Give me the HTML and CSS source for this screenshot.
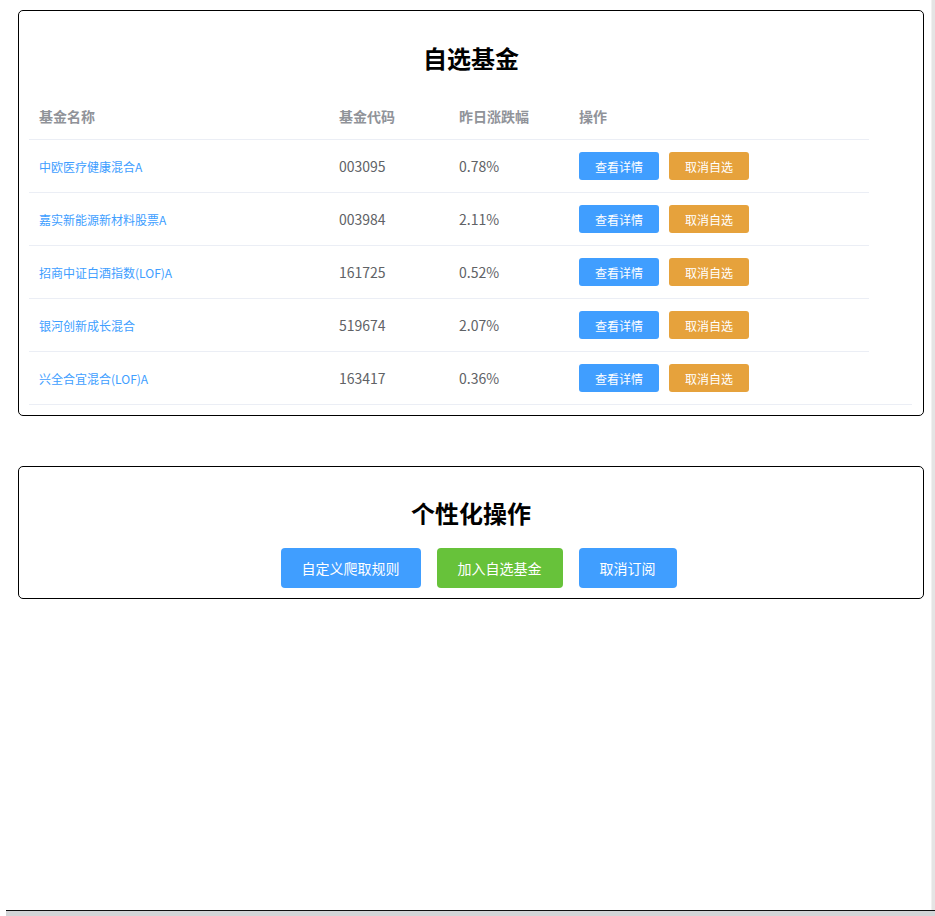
FILE: index.html
```html
<!DOCTYPE html>
<html lang="zh-CN">
<head>
<meta charset="utf-8">
<title>自选基金</title>
<link rel="stylesheet" href="styles.css">
</head>
<body>
<div class="page">
  <section class="card card-funds">
    <h2 class="card-title">自选基金</h2>
    <div class="table">
      <div class="row head">
        <div class="cell c-name">基金名称</div>
        <div class="cell c-code">基金代码</div>
        <div class="cell c-rate">昨日涨跌幅</div>
        <div class="cell c-ops">操作</div>
      </div>
      <div class="row">
        <div class="cell c-name"><a class="fund-link">中欧医疗健康混合A</a></div>
        <div class="cell c-code">003095</div>
        <div class="cell c-rate">0.78%</div>
        <div class="cell c-ops"><button class="btn-s blue">查看详情</button><button class="btn-s orange">取消自选</button></div>
      </div>
      <div class="row">
        <div class="cell c-name"><a class="fund-link">嘉实新能源新材料股票A</a></div>
        <div class="cell c-code">003984</div>
        <div class="cell c-rate">2.11%</div>
        <div class="cell c-ops"><button class="btn-s blue">查看详情</button><button class="btn-s orange">取消自选</button></div>
      </div>
      <div class="row">
        <div class="cell c-name"><a class="fund-link">招商中证白酒指数(LOF)A</a></div>
        <div class="cell c-code">161725</div>
        <div class="cell c-rate">0.52%</div>
        <div class="cell c-ops"><button class="btn-s blue">查看详情</button><button class="btn-s orange">取消自选</button></div>
      </div>
      <div class="row">
        <div class="cell c-name"><a class="fund-link">银河创新成长混合</a></div>
        <div class="cell c-code">519674</div>
        <div class="cell c-rate">2.07%</div>
        <div class="cell c-ops"><button class="btn-s blue">查看详情</button><button class="btn-s orange">取消自选</button></div>
      </div>
      <div class="row">
        <div class="cell c-name"><a class="fund-link">兴全合宜混合(LOF)A</a></div>
        <div class="cell c-code">163417</div>
        <div class="cell c-rate">0.36%</div>
        <div class="cell c-ops"><button class="btn-s blue">查看详情</button><button class="btn-s orange">取消自选</button></div>
      </div>
    </div>
  </section>

  <section class="card card-ops">
    <h2 class="card-title">个性化操作</h2>
    <div class="ops-row">
      <button class="btn blue w140">自定义爬取规则</button>
      <button class="btn green w126">加入自选基金</button>
      <button class="btn blue w98">取消订阅</button>
    </div>
  </section>
</div>
<div class="frame-right"></div>
<div class="frame-bottom"></div>
</body>
</html>
```

FILE: styles.css
```css
html, body {
  margin: 0;
  padding: 0;
  background: #fff;
}
body {
  font-family: "Noto Sans CJK SC", "Microsoft YaHei", "Noto Sans", sans-serif;
  color: #303133;
  width: 935px;
  height: 916px;
  overflow: hidden;
}
.page {
  padding: 10px 0 0 18px;
}
.card {
  width: 884px;
  border: 1px solid #000;
  border-radius: 5px;
  padding: 0 10px 10px;
  background: #fff;
}
.card-title {
  margin: 0;
  text-align: center;
  font-size: 24px;
  font-weight: 700;
  color: #000;
  line-height: 32px;
}
.card-funds .card-title {
  padding-top: 31px;
  padding-bottom: 18px;
}
.card-ops {
  margin-top: 50px;
}
.card-ops .card-title {
  padding-top: 30px;
  padding-bottom: 19px;
}
.table {
  width: 883px;
  border-bottom: 1px solid #ebeef5;
}
.row {
  display: flex;
  width: 840px;
  height: 52px;
  align-items: center;
  border-bottom: 1px solid #ebeef5;
}
.row:last-child {
  border-bottom: none;
}
.row.head {
  height: 47px;
  font-weight: 700;
  color: #909399;
  font-size: 14px;
}
.cell {
  padding: 0 10px;
  box-sizing: border-box;
  font-size: 14px;
  color: #606266;
}
.row.head .cell {
  color: #909399;
}
.c-name { width: 300px; }
.c-code { width: 120px; }
.c-rate { width: 120px; }
.c-ops { width: 300px; display: flex; gap: 10px; }
.fund-link {
  color: #409eff;
  font-size: 12px;
  text-decoration: none;
}
button {
  font-family: inherit;
  border: none;
  color: #fff;
  cursor: pointer;
  padding: 0;
}
.btn-s {
  width: 80px;
  height: 28px;
  font-size: 12px;
  border-radius: 3px;
}
.blue { background: #409eff; }
.orange { background: #e6a23c; }
.green { background: #67c23a; }
.ops-row {
  display: flex;
  justify-content: center;
  gap: 16px;
  padding-left: 15px;
}
.btn {
  height: 40px;
  font-size: 14px;
  border-radius: 4px;
}
.w140 { width: 140px; }
.w126 { width: 126px; }
.w98 { width: 98px; }
.frame-right {
  position: fixed;
  top: 0;
  right: 0;
  width: 3px;
  height: 910px;
  background: #e4e4e4;
  border-left: 1px solid #f0f0f0;
}
.frame-bottom {
  position: fixed;
  left: 6px;
  right: 0;
  bottom: 0;
  height: 5px;
  border-top: 1px solid #111;
  background: #d3d5d7;
}
```
